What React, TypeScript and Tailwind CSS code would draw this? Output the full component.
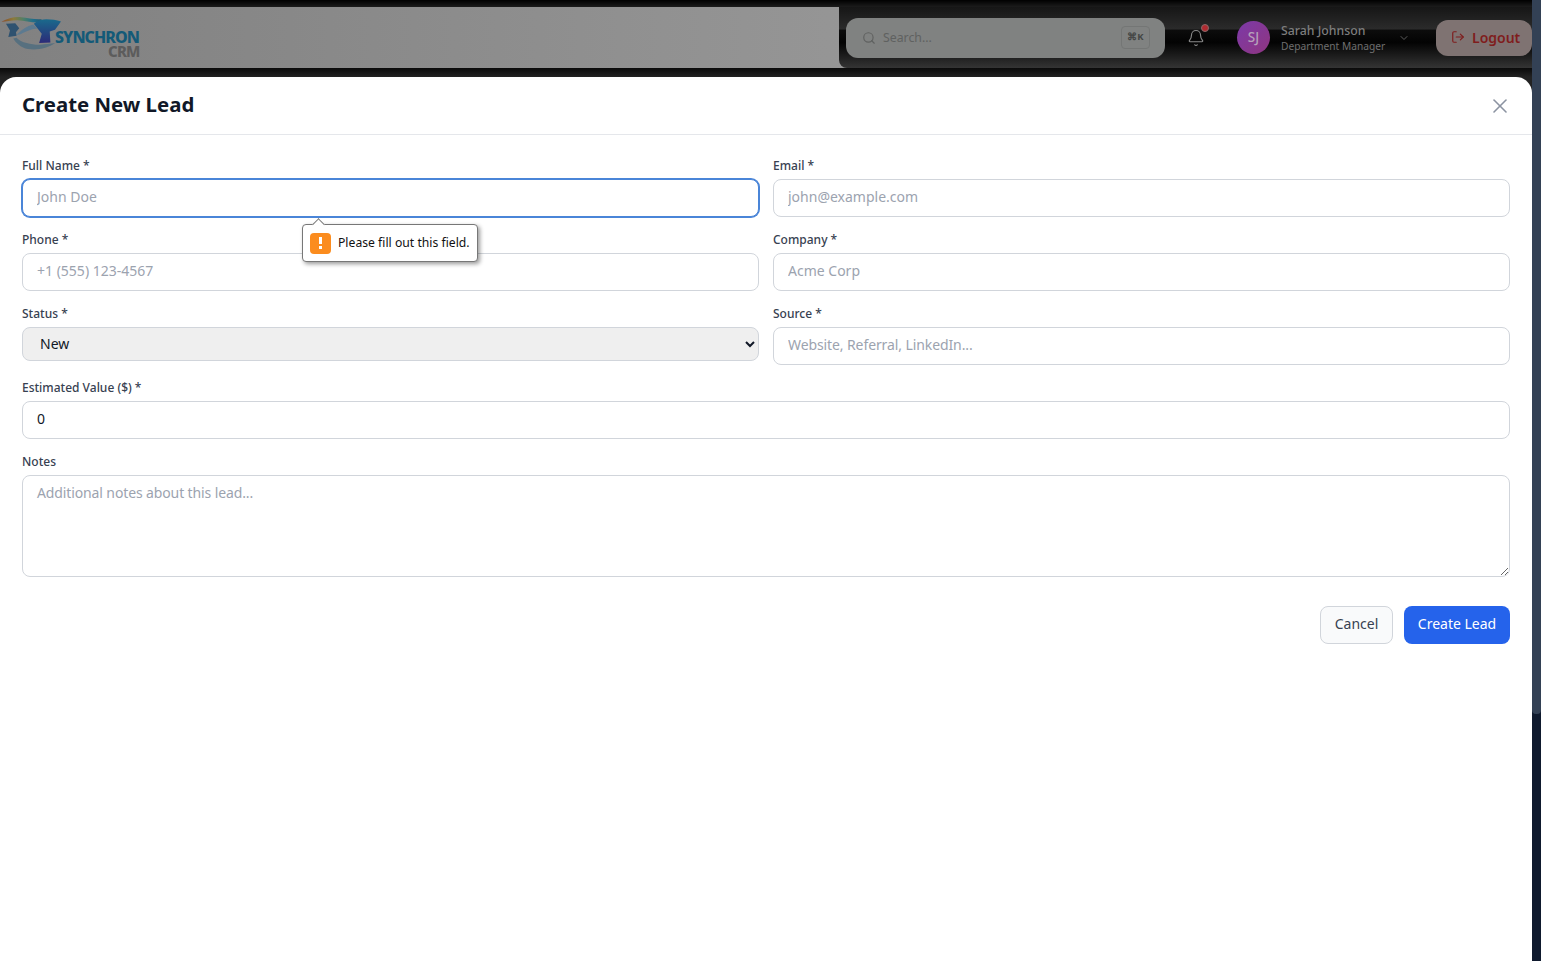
import React from "react";
import { Search, Bell, ChevronDown, LogOut, X } from "lucide-react";

const font = "font-['Noto_Sans',sans-serif]";
const lbl = "block text-[12px] leading-[22px] font-medium text-[#374151] mb-[2px]";
const inp = "block w-full h-[38px] rounded-lg border border-[#d1d5db] bg-white pl-[14px] pr-[14px] pb-[3px] text-[14px] text-[#111827] placeholder:text-[#9ca3af] outline-none";
const inpTight = "block w-full h-[38px] rounded-lg border border-[#d1d5db] bg-white pl-[14px] pr-[14px] pb-[3px] text-[14px] tracking-[-0.1px] text-[#111827] placeholder:text-[#9ca3af] outline-none";
const inpFocus = "block w-full h-[38px] rounded-lg border border-[#4a85d8] shadow-[0_0_0_1px_#4a85d8] bg-white pl-[14px] pr-[14px] pb-[3px] text-[14px] text-[#111827] placeholder:text-[#9ca3af] outline-none";

function Logo() {
  return (
    <div className="relative w-[140px] h-[42px]">
      <svg viewBox="0 0 190 160" className="absolute left-0 top-[-14px] w-[63px] h-[53px]">
        <defs>
          <linearGradient id="arc" x1="0" x2="1" y1="0" y2="0">
            <stop offset="0" stopColor="#8a4a2a" />
            <stop offset="0.3" stopColor="#8c7a3a" />
            <stop offset="0.55" stopColor="#4f7f68" />
            <stop offset="0.8" stopColor="#1f6d8c" />
            <stop offset="1" stopColor="#23586f" />
          </linearGradient>
          <linearGradient id="right" x1="0" x2="0" y1="0" y2="1">
            <stop offset="0" stopColor="#1a6a8c" />
            <stop offset="1" stopColor="#2c2a78" />
          </linearGradient>
        </defs>
        <path d="M50 114 C64 130 100 136 122 135 C136 134 152 132 166 130 C146 146 112 152 84 148 C64 144 48 130 40 116Z" fill="#57707f" />
        <path d="M18 72 L46 70 L58 85 L48 97 L50 108 L25 112 L30 92Z" fill="#2f5270" />
        <path d="M50 106 C62 92 82 78 100 74 L112 86 C92 88 76 96 60 104Z" fill="#5c7a90" />
        <path d="M4 66 C24 54 46 50 64 52 C84 54 104 60 126 58 L120 68 C96 70 72 60 50 61 C34 62 18 64 4 66Z" fill="url(#arc)" />
        <path d="M102 72 C112 62 128 58 140 58 C156 58 170 60 184 65 L166 90 L150 95 L152 128 L118 130 L126 102Z" fill="url(#right)" />
      </svg>
      <div className="absolute left-[55px] top-[16px] text-[16px] leading-[14px] font-extrabold tracking-[-0.95px] text-[#145a78]">SYNCHRON</div>
      <div className="absolute left-[108px] top-[31px] text-[15px] leading-[12px] font-extrabold tracking-[-0.8px] text-[#5c5c5c]">CRM</div>
    </div>
  );
}

function Header() {
  return (
    <div className="relative flex h-[61px] mt-[7px] bg-[linear-gradient(to_right,#818181,#a6a6a6)]">
      <div className="flex-1 flex items-start"><div className="mt-[7px]"><Logo /></div></div>
      <div className="relative flex items-center w-[693px] h-[61px] rounded-bl-lg bg-[linear-gradient(to_bottom,#161616,#2b2b2b_36%,#0c0c0c_38%,#030303_58%,#343434)] shrink-0">
        <div className="ml-[7px] w-[319px] h-[40px] rounded-xl bg-[#808281] flex items-center pl-[16px] pr-[15px] shrink-0">
          <Search size={14} className="text-[#5f6160] mr-[7px]" />
          <span className="text-[12.3px] pt-[1px] text-[#5f6160]">Search...</span>
          <span className="ml-auto w-[29px] h-[23px] rounded border border-[#747675] flex items-center justify-center text-[9.5px] font-bold text-[#444645]">⌘K</span>
        </div>
        <div className="relative ml-[22px] w-[18px] h-[18px] shrink-0">
          <Bell size={18} strokeWidth={1.5} className="text-[#8a8a8a]" />
          <span className="absolute top-[-5px] right-[-4px] w-[8px] h-[8px] rounded-full bg-[#b02a30] border border-[#8a6a6a]" />
        </div>
        <div className="ml-[32px] w-[33px] h-[33px] rounded-full bg-[linear-gradient(135deg,#7c3aa8,#8f3580)] flex items-center justify-center text-[13.5px] font-medium text-[#b6a0ba] shrink-0">SJ</div>
        <div className="ml-[11px] w-[104px] flex flex-col shrink-0 whitespace-nowrap">
          <span className="text-[12.3px] leading-[16px] font-medium text-[#7d7d7d]">Sarah Johnson</span>
          <span className="text-[10.2px] leading-[14px] text-[#6e6e6e]">Department Manager</span>
        </div>
        <ChevronDown size={12} className="ml-[13px] text-[#5c5c5c] shrink-0" />
        <div className="ml-[26px] w-[96px] h-[36px] rounded-xl bg-[#7f7372] flex items-center pl-[15px] pb-[1px] text-[#7f1d1d] text-[14px] font-semibold shrink-0">
          <LogOut size={14} className="mr-[7px]" />Logout
        </div>
      </div>
    </div>
  );
}

export default function App() {
  return (
    <div className={`${font} relative w-[1541px] h-[961px] overflow-hidden bg-[linear-gradient(to_bottom,#000,#1c1c1c_7px,#0a0a0a_68px,#222_77px)] flex flex-col`}>
      <div className="w-[1532px]">
        <Header />
      </div>
      <div className="w-[1532px] mt-[9px] flex-1 bg-white rounded-t-2xl">
        <div className="h-[58px] border-b border-[#e5e7eb] flex items-center justify-between pl-[22px] pr-[22px] pb-[3px]">
          <h2 className="text-[20.4px] font-bold text-[#111827]">Create New Lead</h2>
          <X size={24} strokeWidth={1.6} className="text-[#8b93a1] mr-[-2px] mt-[3px]" />
        </div>
        <form className="px-[22px] pt-[20px]">
          <div className="grid grid-cols-2 gap-x-[14px] gap-y-[12px]">
            <div>
              <label className={lbl}>Full Name *</label>
              <input className={inpFocus} placeholder="John Doe" />
            </div>
            <div>
              <label className={lbl}>Email *</label>
              <input className={inp} placeholder="john@example.com" />
            </div>
            <div>
              <label className={lbl}>Phone *</label>
              <input className={inp} placeholder="+1 (555) 123-4567" />
            </div>
            <div>
              <label className={lbl}>Company *</label>
              <input className={inp} placeholder="Acme Corp" />
            </div>
            <div>
              <label className={lbl}>Status *</label>
              <select className="block w-full h-[34px] rounded-lg border border-[#d1d5db] bg-[#efefef] px-[13px] pb-[2px] text-[14px] text-[#111827]">
                <option>New</option>
              </select>
            </div>
            <div>
              <label className={lbl}>Source *</label>
              <input className={inpTight} placeholder="Website, Referral, LinkedIn..." />
            </div>
          </div>
          <div className="mt-[12px]">
            <label className={lbl}>Estimated Value ($) *</label>
            <input className={inp} defaultValue="0" />
          </div>
          <div className="mt-[12px]">
            <label className={lbl}>Notes</label>
            <textarea className="block w-full h-[102px] rounded-lg border border-[#d1d5db] bg-white px-[14px] pt-[6px] text-[14px] tracking-[-0.12px] placeholder:text-[#9ca3af] outline-none" placeholder="Additional notes about this lead..." />
          </div>
          <div className="flex justify-end gap-[11px] mt-[29px]">
            <button type="button" className="w-[73px] h-[38px] rounded-lg border border-[#d1d5db] bg-[#f9fafb] pb-[3px] text-[14px] text-[#374151]">Cancel</button>
            <button type="button" className="w-[106px] h-[38px] rounded-lg bg-[#2563eb] pb-[3px] text-[14px] text-white">Create Lead</button>
          </div>
        </form>
      </div>
      <div className="absolute right-0 top-0 w-[9px] h-full bg-[#0f1a2e]">
        <div className="h-[714px] rounded-b bg-[#334155]" />
      </div>
      <div className="absolute left-[302px] top-[224px] w-[176px] h-[38px] rounded bg-white border border-[#777] shadow-[2px_2px_4px_rgba(0,0,0,0.4)] flex items-center pl-[7px]">
        <span className="absolute -top-[5px] left-[11px] w-[9px] h-[9px] rotate-45 bg-white border-l border-t border-[#777]" />
        <span className="w-[21px] h-[21px] rounded-sm bg-[#fb8c1e] flex flex-col items-center justify-center gap-[2px]">
          <span className="w-[3px] h-[7px] bg-white" />
          <span className="w-[3px] h-[3px] bg-white" />
        </span>
        <span className="ml-[7px] text-[12.2px] text-[#111]">Please fill out this field.</span>
      </div>
    </div>
  );
}
